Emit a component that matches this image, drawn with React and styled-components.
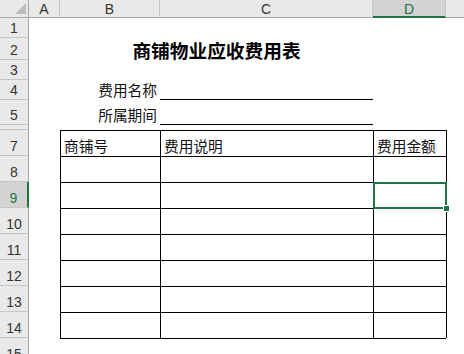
import React from 'react';
import styled, { createGlobalStyle } from 'styled-components';

const GlobalStyle = createGlobalStyle`
  html, body {
    margin: 0;
    padding: 0;
    background: #ffffff;
    overflow: hidden;
  }
  body {
    font-family: "Noto Sans CJK SC", "Liberation Sans", sans-serif;
  }
`;

const GREEN = '#217346';
const LINE = '1px solid #000';

const Sheet = styled.div`
  display: grid;
  grid-template-columns: 29px 31px 100px 213px 73px 72px;
  grid-template-rows: ${({ $rows }) => $rows};
  width: 464px;
  height: 354px;
  overflow: hidden;
  background: #fff;
`;

const Corner = styled.div`
  position: relative;
  background: #e9e9e9;
  border-right: 1px solid #a8a8a8;
  border-bottom: 1px solid #a8a8a8;
  box-sizing: border-box;

  svg {
    position: absolute;
    right: 2px;
    bottom: 3px;
  }
`;

const ColHead = styled.div`
  display: flex;
  align-items: center;
  justify-content: center;
  box-sizing: border-box;
  background: ${({ $active }) => ($active ? '#d3d3d3' : '#e9e9e9')};
  border-right: 1px solid #c6c6c6;
  border-bottom: ${({ $active }) => ($active ? `2px solid ${GREEN}` : '1px solid #a8a8a8')};
  color: ${({ $active }) => ($active ? GREEN : '#333')};
  font-family: "Liberation Sans", Arial, sans-serif;
  font-size: 14px;
  padding-top: ${({ $active }) => ($active ? '1px' : '0')};
`;

const RowHead = styled.div`
  display: flex;
  align-items: flex-end;
  justify-content: center;
  box-sizing: border-box;
  overflow: hidden;
  background: ${({ $active }) => ($active ? '#d3d3d3' : '#e9e9e9')};
  border-right: ${({ $active }) => ($active ? `2px solid ${GREEN}` : '1px solid #a8a8a8')};
  border-bottom: 1px solid #c6c6c6;
  color: ${({ $active }) => ($active ? GREEN : '#333')};
  font-family: "Liberation Sans", Arial, sans-serif;
  font-size: 14px;
  line-height: 16px;
  padding-bottom: 1px;
`;

const Cell = styled.div`
  position: relative;
  display: flex;
  align-items: flex-end;
  justify-content: ${({ $align }) => $align || 'flex-start'};
  box-sizing: border-box;
  min-width: 0;
  grid-column: ${({ $span }) => ($span ? `span ${$span}` : 'auto')};
  border-top: ${({ $t }) => ($t ? LINE : 'none')};
  border-left: ${({ $l }) => ($l ? LINE : 'none')};
  border-bottom: ${({ $b }) => ($b ? LINE : 'none')};
  padding: 0 3px 1px;
  color: #111;
  font-size: 14.7px;
  line-height: 18px;
  white-space: nowrap;
`;

const Title = styled(Cell)`
  align-items: center;
  justify-content: center;
  font-size: 18.7px;
  font-weight: 700;
  color: #000;
  padding: 1px 0 0;
`;

const Selection = styled.div`
  position: absolute;
  top: -1px;
  left: -1px;
  right: -1px;
  bottom: -1px;
  border: 2px solid ${GREEN};
  z-index: 2;
  pointer-events: none;
`;

const Handle = styled.span`
  position: absolute;
  right: -5px;
  bottom: -5px;
  width: 5px;
  height: 5px;
  background: ${GREEN};
  border: 1px solid #fff;
`;

const rowHeights = [20, 22, 20, 20, 25, 5, 26, 26, 26, 26, 26, 26, 26, 26, 26];
const columns = ['A', 'B', 'C', 'D', 'E'];
const headers = ['商铺号', '费用说明', '费用金额'];
const fields = { 4: '费用名称', 5: '所属期间' };

const renderRow = (n) => {
  if (n === 2) {
    return [
      <Cell key="a" />,
      <Title key="t" $span={2}>商铺物业应收费用表</Title>,
      <Cell key="d" />,
      <Cell key="e" />,
    ];
  }
  if (fields[n]) {
    return [
      <Cell key="a" />,
      <Cell key="b" $align="flex-end">{fields[n]}</Cell>,
      <Cell key="c" $b />,
      <Cell key="d" />,
      <Cell key="e" />,
    ];
  }
  if (n >= 7) {
    const ruled = n <= 15;
    return [
      <Cell key="a" />,
      <Cell key="b" $t={ruled} $l={n <= 14}>{n === 7 ? headers[0] : null}</Cell>,
      <Cell key="c" $t={ruled} $l={n <= 14}>{n === 7 ? headers[1] : null}</Cell>,
      <Cell key="d" $t={ruled} $l={n <= 14}>
        {n === 7 ? headers[2] : null}
        {n === 9 && (
          <Selection>
            <Handle />
          </Selection>
        )}
      </Cell>,
      <Cell key="e" $l={n <= 14} />,
    ];
  }
  return columns.map((c) => <Cell key={c} />);
};

const App = () => {
  const template = ['18px', ...rowHeights.map((h) => `${h}px`)].join(' ');

  return (
    <>
      <GlobalStyle />
      <Sheet $rows={template}>
        <Corner>
          <svg width="11" height="11" viewBox="0 0 11 11">
            <polygon points="11,0 11,11 0,11" fill="#bdbdbd" />
          </svg>
        </Corner>
        {columns.map((c) => (
          <ColHead key={c} $active={c === 'D'}>{c}</ColHead>
        ))}
        {rowHeights.map((h, i) => {
          const n = i + 1;
          return (
            <React.Fragment key={n}>
              <RowHead $active={n === 9}>{n}</RowHead>
              {renderRow(n)}
            </React.Fragment>
          );
        })}
      </Sheet>
    </>
  );
};

export default App;
